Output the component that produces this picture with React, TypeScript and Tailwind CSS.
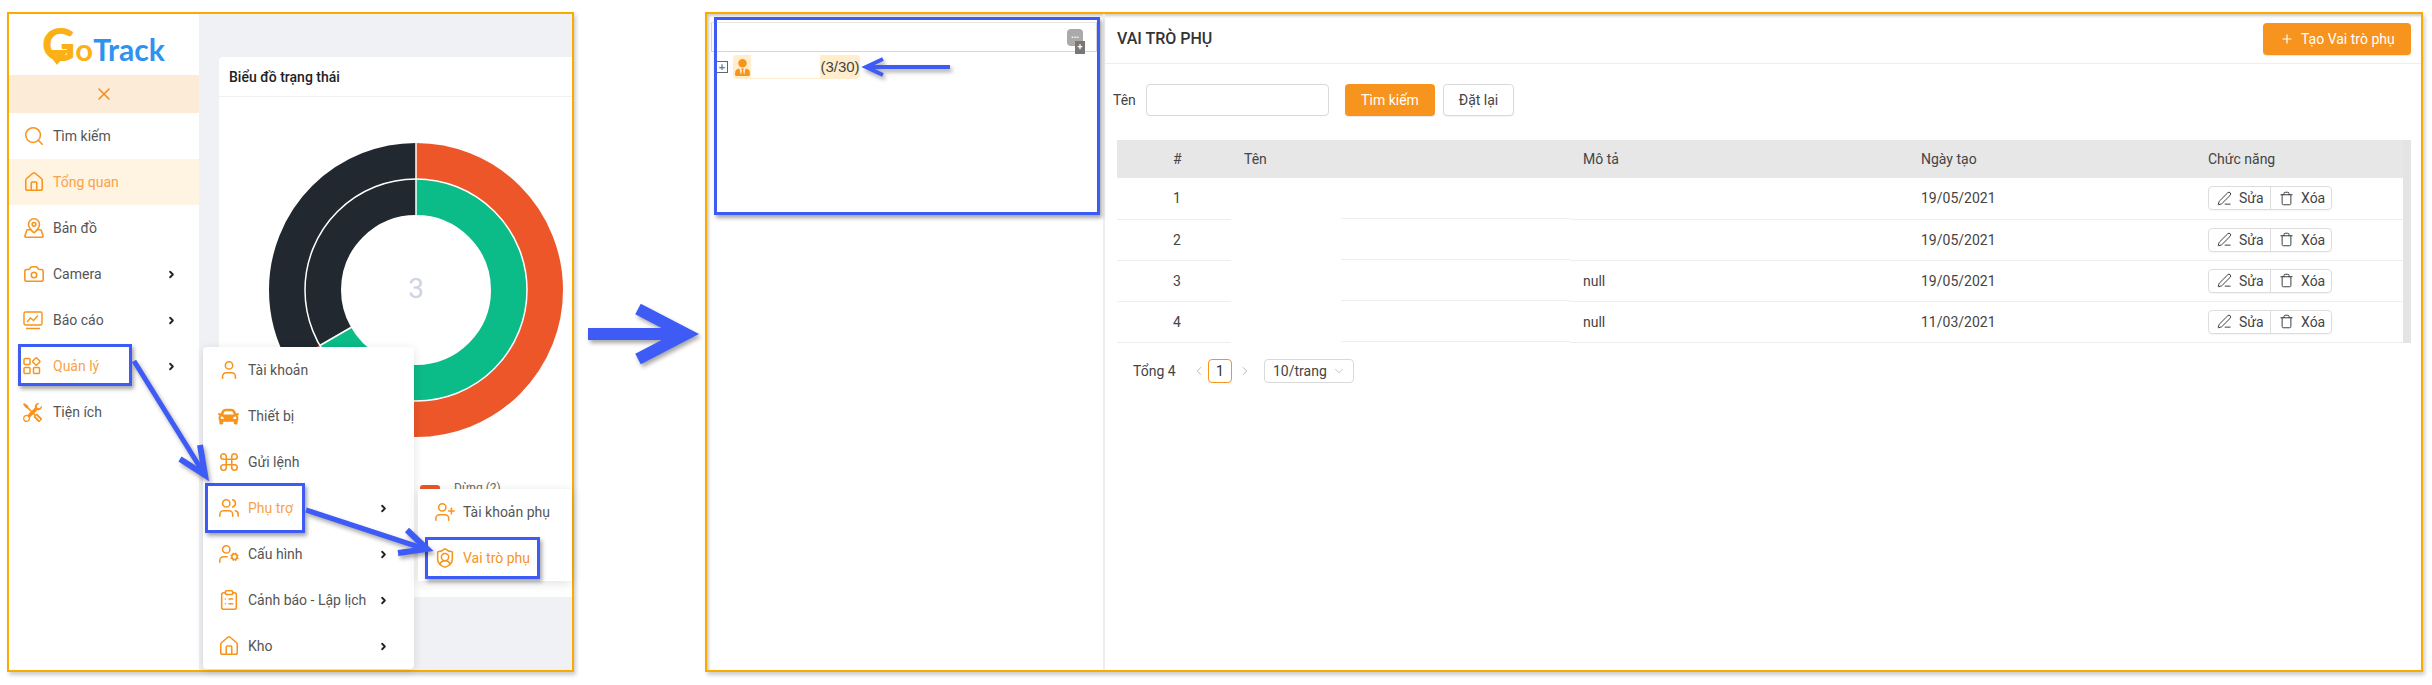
import type { ReactNode } from 'react'
import {
  Camera,
  ChevronDown,
  ChevronLeft,
  ChevronRight,
  ClipboardList,
  Command,
  House,
  MapPinned,
  PenLine,
  Plus,
  Search,
  ShieldUser,
  Trash,
  User,
  UserCog,
  UserPlus,
  Users,
  X,
} from 'lucide-react'
import { BsTools } from 'react-icons/bs'
import { FaCar, FaUserTie } from 'react-icons/fa'

const ORANGE = '#f7941d'

function ReportIcon() {
  return (
    <svg width="20" height="20" viewBox="0 0 20 20" fill="none" stroke={ORANGE} strokeWidth="1.4">
      <rect x="1" y="2" width="18" height="13" rx="1.5" />
      <path d="M4 12l3.500-4 3 2.500L15 5.500M3 18.500h14" />
    </svg>
  )
}

function GridIcon() {
  return (
    <svg width="18" height="18" viewBox="0 0 18 18" fill="none" stroke={ORANGE} strokeWidth="1.5">
      <rect x="1" y="1.500" width="6" height="6" rx="1" />
      <rect x="10.500" y="1.700" width="5.600" height="5.600" rx="1" transform="rotate(45 13.300 4.500)" />
      <rect x="1" y="10.500" width="6" height="6" rx="1" />
      <rect x="10.500" y="10.500" width="6" height="6" rx="1" />
    </svg>
  )
}

function SideRow({
  icon,
  label,
  active,
  current,
  arrow,
}: {
  icon: ReactNode
  label: string
  active?: boolean
  current?: boolean
  arrow?: boolean
}) {
  return (
    <div
      className={`flex h-[46px] items-center pl-[14px] text-sm ${
        current ? 'bg-[#fff3e2]' : ''
      } ${active || current ? 'text-[#f9a24a]' : 'text-[#555]'}`}
    >
      <span className="flex w-[30px] items-center justify-start">{icon}</span>
      <span className="w-[113px]">{label}</span>
      {arrow && <ChevronRight size={11} strokeWidth={4} className="text-[#222]" />}
    </div>
  )
}

function PopRow({
  icon,
  label,
  active,
  arrow,
}: {
  icon: ReactNode
  label: string
  active?: boolean
  arrow?: boolean
}) {
  return (
    <div
      className={`flex h-[46px] items-center pl-[15px] text-sm ${
        active ? 'text-[#f9a24a]' : 'text-[#555]'
      }`}
    >
      <span className="flex w-[30px] items-center">{icon}</span>
      <span className="w-[130px]">{label}</span>
      {arrow && <ChevronRight size={11} strokeWidth={4} className="text-[#222]" />}
    </div>
  )
}

function Box({ className }: { className: string }) {
  return (
    <div
      className={`pointer-events-none absolute border-[3px] border-[#3f5bf6] shadow-[2px_3px_4px_rgba(0,0,0,0.35)] ${className}`}
    />
  )
}

function Donut() {
  const arc = (r: number, color: string, from: number, to: number) => {
    const c = 2 * Math.PI * r
    return (
      <circle
        cx="150"
        cy="150"
        r={r}
        fill="none"
        stroke={color}
        strokeWidth={36}
        strokeDasharray={`${(c * (to - from)) / 360} ${c}`}
        strokeDashoffset={(-c * from) / 360}
        transform="rotate(-90 150 150)"
      />
    )
  }
  return (
    <svg width="300" height="300" viewBox="0 0 300 300">
      {arc(129, '#ec5629', 0, 240)}
      {arc(129, '#212830', 240, 360)}
      {arc(93, '#0bbb88', 0, 240)}
      {arc(93, '#212830', 240, 360)}
      <circle cx="150" cy="150" r="111" fill="none" stroke="#fff" strokeWidth="1.500" />
      <path d="M150 75V3" stroke="#fff" strokeWidth="1.500" />
      <path d="M85 187.500L54 205.500" stroke="#fff" strokeWidth="1.500" />
      <text x="150" y="158" textAnchor="middle" fontSize="28" fill="#d0d3e2" fontFamily="Roboto, sans-serif">
        3
      </text>
    </svg>
  )
}

const rows = [
  { id: 1, desc: '', date: '19/05/2021' },
  { id: 2, desc: '', date: '19/05/2021' },
  { id: 3, desc: 'null', date: '19/05/2021' },
  { id: 4, desc: 'null', date: '11/03/2021' },
]

function Arrows() {
  const blue = '#3f5bf6'
  return (
    <svg
      className="pointer-events-none absolute left-0 top-0 drop-shadow-[2px_3px_2px_rgba(0,0,0,0.35)]"
      width="2432"
      height="685"
      fill="none"
    >
      <path d="M134 361L203 472" stroke={blue} strokeWidth="5" />
      <path d="M200 445L205 475L180 459" stroke={blue} strokeWidth="6" />
      <path d="M306 510L425 549" stroke={blue} strokeWidth="5" />
      <path d="M407 530L427 549L398 553" stroke={blue} strokeWidth="6" />
      <path d="M588 334H685" stroke={blue} strokeWidth="12" />
      <path d="M638 309L686 334L638 359" stroke={blue} strokeWidth="12" strokeLinejoin="miter" />
      <path d="M950 67H868" stroke={blue} strokeWidth="4" />
      <path d="M883 59L866 67L883 75" stroke={blue} strokeWidth="4" />
    </svg>
  )
}

export default function App() {
  const icon = { size: 22, color: ORANGE, strokeWidth: 1.7 }
  return (
    <div className="relative h-[685px] w-[2432px] overflow-hidden bg-white font-['Roboto',sans-serif] text-[#444]">
      <div className="flex items-start pl-[7px] pt-3">
        {/* left screenshot */}
        <div className="flex h-[660px] w-[567px] overflow-hidden border-2 border-[#f9ab00] shadow-[2px_3px_4px_rgba(0,0,0,0.2),inset_2px_2px_3px_rgba(0,0,0,0.2)]">
          <aside className="w-[190px] shrink-0 bg-white">
            <div className="relative flex h-[61px] items-start pl-[33px] pt-[11px] font-['Lato',sans-serif] font-bold leading-none">
              <span className="text-[46px] font-black leading-[38px] text-[#fbb116]">G</span>
              <span className="mt-[10px] text-[31px] leading-[28px] text-[#fbb116]">o</span>
              <span className="mt-[10px] text-[30px] leading-[28px] text-[#2e93ee]">Track</span>
              <svg className="absolute left-[35px] top-[36px]" width="26" height="15" viewBox="0 0 26 15">
                <path d="M1 0C6 6 10 11 13 15C16 11 20 6 25 0Z" fill="#fbb116" />
              </svg>
            </div>
            <div className="flex h-[38px] items-center justify-center bg-[#fcebd6]">
              <X size={20} color="#f58a1f" strokeWidth={1.8} />
            </div>
            <SideRow icon={<Search {...icon} />} label="Tìm kiếm" />
            <SideRow icon={<House {...icon} />} label="Tổng quan" current />
            <SideRow icon={<MapPinned {...icon} />} label="Bản đồ" />
            <SideRow icon={<Camera {...icon} />} label="Camera" arrow />
            <SideRow icon={<ReportIcon />} label="Báo cáo" arrow />
            <SideRow icon={<GridIcon />} label="Quản lý" active arrow />
            <SideRow icon={<BsTools size={19} color={ORANGE} />} label="Tiện ích" />
          </aside>
          <main className="flex-1 overflow-hidden bg-[#eff1f5] pl-5 pt-[43px]">
            <div className="h-[540px] w-[360px] rounded-t bg-white">
              <div className="flex h-[40px] items-center border-b border-[#f0f0f0] pl-2.5 text-sm font-medium text-[#222]">
                Biểu đồ trạng thái
              </div>
              <div className="pl-[47px] pt-[43px]">
                <Donut />
              </div>
              <div className="flex items-center gap-[14px] pl-[201px] pt-[40px] text-xs text-[#666]">
                <span className="h-[6px] w-5 rounded-full bg-[#ec5629]" />
                Dừng (2)
              </div>
            </div>
          </main>
        </div>

        {/* right screenshot */}
        <div className="ml-[131px] flex h-[660px] w-[1718px] border-2 border-[#f9ab00] shadow-[2px_3px_4px_rgba(0,0,0,0.2),inset_2px_2px_3px_rgba(0,0,0,0.2)]">
          <div className="w-[398px] shrink-0 border-r-2 border-[#eeeeee] pl-1 pt-2">
            <div className="relative h-[30px] w-[386px] border border-[#d5d5d5] border-t-[#e5e5e5]">
              <div className="absolute left-[355px] top-[6px] flex h-[17px] w-4 items-center justify-center rounded-sm bg-[#aaa] text-[8px] leading-none text-white">
                •••
              </div>
              <div className="absolute left-[363px] top-[18px] flex h-[13px] w-[10px] items-center justify-center bg-[#777] text-[9px] font-bold leading-none text-white">
                +
              </div>
            </div>
            <div className="mt-[3px] flex h-6 items-center font-['Liberation_Sans',sans-serif] text-[15px]">
              <span className="ml-[5px] flex h-3 w-3 items-center justify-center border border-[#666] text-[11px] font-bold leading-none text-[#777]">
                +
              </span>
              <span className="ml-[5px] flex h-6 w-[18px] items-center justify-center rounded-l-sm bg-[#ffedcc]">
                <FaUserTie size={17} color={ORANGE} />
              </span>
              <span className="h-6 w-[69px] border-b border-[#ffedcc]" />
              <span className="flex h-6 w-[40px] items-center justify-center rounded-r-sm bg-[#ffedcc] text-[#444]">
                (3/30)
              </span>
            </div>
          </div>

          <div className="min-w-0 flex-1">
            <div className="flex h-[50px] items-center justify-between border-b border-[#eeeeee] pl-3 pr-[10px]">
              <h1 className="text-base font-medium text-[#333]">VAI TRÒ PHỤ</h1>
              <button className="flex h-8 w-[148px] items-center gap-[7px] rounded-sm bg-[#f7941d] pl-[17px] text-sm text-white shadow-[0_1px_1px_rgba(0,0,0,0.1)]">
                <Plus size={14} strokeWidth={2} />
                Tạo Vai trò phụ
              </button>
            </div>

            <div className="flex items-center pl-2 pt-5 text-sm">
              <span className="w-[33px]">Tên</span>
              <input className="h-8 w-[183px] rounded-sm border border-[#d9d9d9] bg-white" />
              <button className="ml-4 h-8 w-[90px] rounded-sm bg-[#f7941d] text-white shadow-[0_1px_1px_rgba(0,0,0,0.1)]">
                Tìm kiếm
              </button>
              <button className="ml-2 h-8 w-[71px] rounded-sm border border-[#d9d9d9] bg-white shadow-[0_1px_1px_rgba(0,0,0,0.05)]">
                Đặt lại
              </button>
            </div>

            <div className="ml-3 mt-6 flex w-[1294px]">
              <table className="w-[1286px] table-fixed border-collapse text-left text-sm">
                <colgroup>
                  <col className="w-[114px]" />
                  <col className="w-[339px]" />
                  <col className="w-[338px]" />
                  <col className="w-[282px]" />
                  <col className="w-[213px]" />
                </colgroup>
                <thead>
                  <tr className="h-[38px] bg-[#e7e7e7]">
                    <th className="pl-[56px] font-normal">#</th>
                    <th className="pl-[13px] font-normal">Tên</th>
                    <th className="pl-[13px] font-normal">Mô tả</th>
                    <th className="pl-[13px] font-normal">Ngày tạo</th>
                    <th className="pl-[18px] font-normal">Chức năng</th>
                  </tr>
                </thead>
                <tbody>
                  {rows.map((row) => (
                    <tr key={row.id} className="h-[41px]">
                      <td className="border-b border-[#eeeeee] pl-[56px]">{row.id}</td>
                      <td className="p-0 align-bottom">
                        {/* tên bị che trong ảnh gốc */}
                        <div className="ml-[110px] h-[41px] border-b border-[#eeeeee]" />
                      </td>
                      <td className="border-b border-[#eeeeee] pl-[13px]">{row.desc}</td>
                      <td className="border-b border-[#eeeeee] pl-[13px]">{row.date}</td>
                      <td className="border-b border-[#eeeeee] pl-[18px]">
                        <div className="flex h-6 w-[124px] items-center rounded-sm border border-[#dddddd] text-sm shadow-[0_1px_1px_rgba(0,0,0,0.04)]">
                          <span className="flex h-full w-[62px] items-center gap-[7px] border-r border-[#dddddd] pl-2">
                            <PenLine size={15} strokeWidth={1.5} color="#333" />
                            Sửa
                          </span>
                          <span className="flex h-full items-center gap-[7px] pl-2">
                            <Trash size={15} strokeWidth={1.5} color="#333" />
                            Xóa
                          </span>
                        </div>
                      </td>
                    </tr>
                  ))}
                </tbody>
              </table>
              <div className="w-2 bg-[#e4e4e4]" />
            </div>

            <div className="flex items-center pl-7 pt-4 text-sm">
              <span className="w-[59px]">Tổng 4</span>
              <ChevronLeft size={14} strokeWidth={1.4} className="text-[#aaa]" />
              <span className="ml-[2px] flex h-6 w-6 items-center justify-center rounded-sm border border-[#f7941d] text-[#333]">
                1
              </span>
              <ChevronRight size={14} strokeWidth={1.4} className="ml-[6px] text-[#aaa]" />
              <div className="ml-3 flex h-6 w-[90px] items-center gap-[5px] rounded-sm border border-[#d9d9d9] pl-2">
                10/trang
                <ChevronDown size={14} strokeWidth={1} className="text-[#999]" />
              </div>
            </div>
          </div>
        </div>
      </div>

      {/* menu bay */}
      <div className="absolute left-[203px] top-[347px] w-[211px] rounded-sm bg-white shadow-[0_2px_10px_rgba(0,0,0,0.12)]">
        <PopRow icon={<User {...icon} />} label="Tài khoản" />
        <PopRow icon={<FaCar size={21} color={ORANGE} />} label="Thiết bị" />
        <PopRow icon={<Command {...icon} />} label="Gửi lệnh" />
        <PopRow icon={<Users {...icon} />} label="Phụ trợ" active arrow />
        <PopRow icon={<UserCog {...icon} />} label="Cấu hình" arrow />
        <PopRow icon={<ClipboardList {...icon} />} label="Cảnh báo - Lập lịch" arrow />
        <PopRow icon={<House {...icon} />} label="Kho" arrow />
      </div>
      <div className="absolute left-[418px] top-[489px] h-[92px] w-[154px] bg-white shadow-[0_2px_10px_rgba(0,0,0,0.12)]">
        <div className="flex h-[46px] items-center pl-[16px] text-sm text-[#555]">
          <span className="w-[29px]">
            <UserPlus {...icon} />
          </span>
          Tài khoản phụ
        </div>
        <div className="flex h-[46px] items-center pl-[16px] text-sm text-[#f7941d]">
          <span className="w-[29px]">
            <ShieldUser {...icon} />
          </span>
          Vai trò phụ
        </div>
      </div>

      {/* chú thích xanh */}
      <Box className="left-[18px] top-[344px] h-[42px] w-[114px]" />
      <Box className="left-[205px] top-[483px] h-[50px] w-[100px]" />
      <Box className="left-[425px] top-[537px] h-[42px] w-[115px]" />
      <Box className="left-[714px] top-[17px] h-[198px] w-[386px] border-4" />
      <Arrows />
    </div>
  )
}
